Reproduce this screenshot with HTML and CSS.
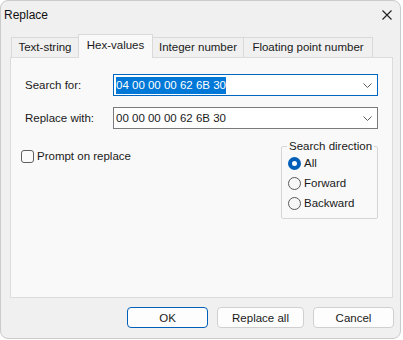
FILE: index.html
```html
<!DOCTYPE html>
<html lang="en">
<head>
    <meta charset="UTF-8">
    <meta name="viewport" content="width=device-width, initial-scale=1.0">
    <title>Replace</title>
    <link rel="stylesheet" href="styles.css">
</head>
<body>
    <div class="window">
        <div class="titlebar">
            <span class="title">Replace</span>
            <svg class="close" width="10" height="10" viewBox="0 0 10 10">
                <path d="M0.5 0.5 L9.5 9.5 M9.5 0.5 L0.5 9.5" stroke="#1f1f1f" stroke-width="1.1" fill="none"/>
            </svg>
        </div>

        <div class="tabs">
            <div class="tab tab-text">Text-string</div>
            <div class="tab tab-hex active">Hex-values</div>
            <div class="tab tab-int">Integer number</div>
            <div class="tab tab-float">Floating point number</div>
        </div>

        <div class="panel">
            <div class="field">
                <label>Search for:</label>
                <div class="combo focused">
                    <span class="selected">04 00 00 00 62 6B 30</span>
                    <svg class="chevron" width="9" height="5" viewBox="0 0 9 5">
                        <path d="M0.5 0.5 L4.5 4.5 L8.5 0.5" stroke="#5c5c5c" fill="none"/>
                    </svg>
                </div>
            </div>
            <div class="field">
                <label>Replace with:</label>
                <div class="combo">
                    <span>00 00 00 00 62 6B 30</span>
                    <svg class="chevron" width="9" height="5" viewBox="0 0 9 5">
                        <path d="M0.5 0.5 L4.5 4.5 L8.5 0.5" stroke="#5c5c5c" fill="none"/>
                    </svg>
                </div>
            </div>

            <div class="options">
                <div class="check">
                    <span class="box"></span>
                    <span>Prompt on replace</span>
                </div>
                <fieldset class="direction">
                    <legend>Search direction</legend>
                    <div class="radio"><span class="dot checked"></span>All</div>
                    <div class="radio"><span class="dot"></span>Forward</div>
                    <div class="radio"><span class="dot"></span>Backward</div>
                </fieldset>
            </div>
        </div>

        <div class="buttons">
            <button class="btn default">OK</button>
            <button class="btn wide">Replace all</button>
            <button class="btn">Cancel</button>
        </div>
    </div>
</body>
</html>
```

FILE: styles.css
```css
body {
    margin: 0;
    background: #fff;
    font-family: "Liberation Sans", Arial, sans-serif;
    font-size: 11.5px;
    color: #1a1a1a;
}
.window {
    width: 401px;
    height: 339px;
    box-sizing: border-box;
    background: #f0f0f0;
    border: 1px solid #cbcbcb;
    border-radius: 8px;
    overflow: hidden;
}
.titlebar {
    height: 27px;
    display: flex;
    align-items: center;
    justify-content: space-between;
    padding: 0 8px 0 3px;
}
.title {
    font-size: 12px;
    color: #111;
}
.close {
    margin-top: 1px;
}
.tabs {
    display: flex;
    align-items: flex-end;
    height: 23px;
    margin: 6px 0 0 10px;
}
.tab {
    box-sizing: border-box;
    height: 20px;
    line-height: 19px;
    text-align: center;
    background: #f0f0f0;
    border: 1px solid #d9d9d9;
    border-bottom: none;
    margin-left: -1px;
}
.tab:first-child {
    margin-left: 0;
}
.tab.active {
    height: 24px;
    line-height: 20px;
    margin-bottom: -1px;
    background: #f9f9f9;
    position: relative;
    z-index: 1;
}
.tab-text { width: 68px; }
.tab-hex { width: 75px; }
.tab-int { width: 92px; }
.tab-float { width: 130px; }

.panel {
    box-sizing: border-box;
    width: 383px;
    height: 241px;
    margin-left: 9px;
    background: #f9f9f9;
    border: 1px solid #dcdcdc;
    padding: 16px 0 0 10px;
}
.field {
    display: flex;
    align-items: center;
    margin-bottom: 11px;
}
.field label {
    width: 92px;
    padding-left: 4px;
    box-sizing: border-box;
}
.combo {
    box-sizing: border-box;
    width: 265px;
    height: 22px;
    background: #fff;
    border: 1px solid #7a7a7a;
    display: flex;
    align-items: center;
    justify-content: space-between;
    padding: 0 5px 0 2px;
}
.combo.focused {
    border-color: #0067c0;
}
.selected {
    background: #0078d7;
    color: #fff;
    line-height: 17px;
}
.options {
    display: flex;
    justify-content: space-between;
    width: 357px;
    margin-top: -1px;
}
.check {
    display: flex;
    align-items: center;
    gap: 3px;
    margin-top: 10px;
    height: 14px;
}
.box {
    width: 13px;
    height: 13px;
    box-sizing: border-box;
    border: 1px solid #5f5f5f;
    border-radius: 3px;
    background: #fbfbfb;
}
.direction {
    box-sizing: border-box;
    width: 97px;
    margin: 0;
    padding: 0 0 5px 5px;
    border: 1px solid #d5d5d5;
    border-radius: 2px;
}
.direction legend {
    padding: 0 2px;
    line-height: 14px;
    white-space: nowrap;
}
.radio {
    display: flex;
    align-items: center;
    gap: 3px;
    height: 20px;
    margin-left: 1px;
}
.dot {
    width: 13px;
    height: 13px;
    box-sizing: border-box;
    border: 1px solid #5a5a5a;
    border-radius: 50%;
    background: #f7f7f7;
}
.dot.checked {
    border: 4px solid #005fb8;
    background: #fff;
}
.buttons {
    display: flex;
    justify-content: flex-end;
    gap: 9px;
    margin-top: 9px;
    padding-right: 6px;
}
.btn {
    width: 81px;
    height: 21px;
    padding: 0;
    font-family: inherit;
    font-size: 11.5px;
    color: #1a1a1a;
    background: #fdfdfd;
    border: 1px solid #d0d0d0;
    border-radius: 4px;
}
.btn.wide {
    width: 87px;
}
.btn.default {
    border-color: #005fb8;
}
```
